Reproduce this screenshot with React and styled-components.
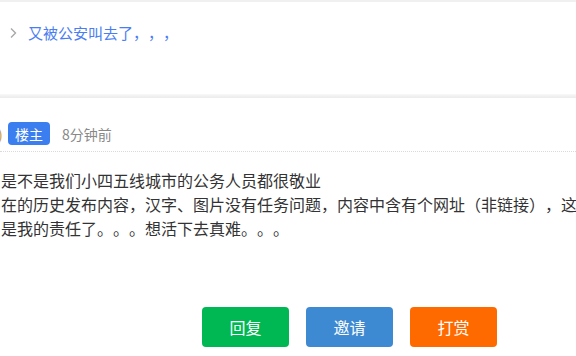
import React from 'react';
import styled, { createGlobalStyle } from 'styled-components';

const GlobalStyle = createGlobalStyle`
  html, body {
    margin: 0;
    padding: 0;
    background: #fff;
    overflow: hidden;
  }
  body {
    font-family: "Noto Sans CJK SC", "Noto Sans", sans-serif;
    text-spacing-trim: space-all;
  }
`;

const Page = styled.div`
  width: 576px;
  height: 356px;
  overflow: hidden;
  background: #fff;
`;

const TopStrip = styled.div`
  height: 2px;
  background: #f0f0f0;
`;

const TitleCard = styled.div`
  height: 92px;
  box-sizing: border-box;
  padding: 20px 0 0 9px;
  display: flex;
  align-items: flex-start;
  gap: 9px;
  .chevron {
    width: 10px;
    height: 22px;
    display: flex;
    align-items: center;
  }
  .title {
    font-size: 15px;
    line-height: 22px;
    color: #4a7df2;
  }
`;

const Divider = styled.div`
  height: 4px;
  background: linear-gradient(#f8f8f8, #ebebeb);
`;

const Post = styled.div`
  padding-top: 24px;
`;

const MetaRow = styled.div`
  display: flex;
  align-items: center;
  height: 23px;
  .tail {
    margin-left: -2px;
    width: 10px;
    font-size: 14px;
    color: #c9962a;
  }
  .time {
    margin-left: 12px;
    font-size: 14px;
    color: #888;
  }
`;

const Badge = styled.span`
  display: inline-flex;
  align-items: center;
  justify-content: center;
  width: 42px;
  height: 23px;
  border-radius: 4px;
  background: #3b7ef0;
  color: #fff;
  font-size: 14px;
`;

const Rule = styled.div`
  margin-top: 6px;
  border-top: 1px dotted #dadada;
`;

const Content = styled.div`
  padding: 16px 0 0 1px;
  font-size: 16px;
  line-height: 24px;
  color: #333;
  p {
    margin: 0;
    white-space: nowrap;
  }
`;

const Actions = styled.div`
  display: flex;
  gap: 17px;
  padding: 67px 0 0 202px;
`;

const Button = styled.button`
  width: 87px;
  height: 40px;
  border: none;
  border-radius: 4px;
  background: ${(p) => p.color};
  color: #fff;
  font-family: inherit;
  font-size: 16px;
  padding: 0;
`;

const App = () => (
  <Page>
    <GlobalStyle />
    <TopStrip />
    <TitleCard>
      <span className="chevron">
        <svg width="8" height="12" viewBox="0 0 8 12">
          <path d="M2 1.5 L6.5 6 L2 10.5" fill="none" stroke="#a8a8a8" strokeWidth="1.4" />
        </svg>
      </span>
      <span className="title">又被公安叫去了，，，</span>
    </TitleCard>
    <Divider />
    <Post>
      <MetaRow>
        <span className="tail">)</span>
        <Badge>楼主</Badge>
        <span className="time">8分钟前</span>
      </MetaRow>
      <Rule />
      <Content>
        <p>是不是我们小四五线城市的公务人员都很敬业</p>
        <p>在的历史发布内容，汉字、图片没有任务问题，内容中含有个网址（非链接），这</p>
        <p>是我的责任了。。。想活下去真难。。。</p>
      </Content>
      <Actions>
        <Button color="#00b853">回复</Button>
        <Button color="#3d8ad2">邀请</Button>
        <Button color="#ff6a00">打赏</Button>
      </Actions>
    </Post>
  </Page>
);

export default App;
